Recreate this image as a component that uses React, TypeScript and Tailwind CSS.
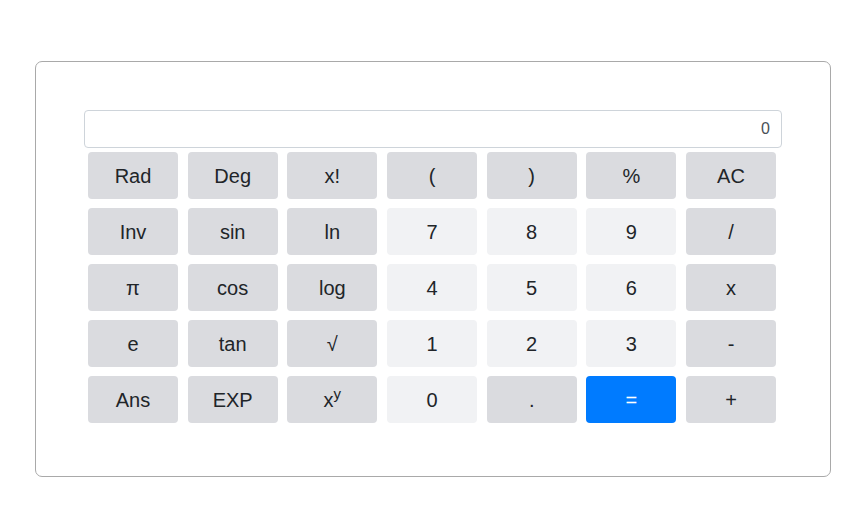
import React from "react";

type Key = { label: React.ReactNode; kind: "fn" | "num" | "eq" };

const fn = (label: React.ReactNode): Key => ({ label, kind: "fn" });
const num = (label: React.ReactNode): Key => ({ label, kind: "num" });

const keys: Key[] = [
    fn("Rad"), fn("Deg"), fn("x!"), fn("("), fn(")"), fn("%"), fn("AC"),
    fn("Inv"), fn("sin"), fn("ln"), num("7"), num("8"), num("9"), fn("/"),
    fn("π"), fn("cos"), fn("log"), num("4"), num("5"), num("6"), fn("x"),
    fn("e"), fn("tan"), fn("√"), num("1"), num("2"), num("3"), fn("-"),
    fn("Ans"), fn("EXP"),
    fn(<span>x<sup className="text-[15px] relative -top-[8px]">y</sup></span>),
    num("0"), fn("."), { label: "=", kind: "eq" }, fn("+"),
];

const kindClass: Record<Key["kind"], string> = {
    fn: "bg-[#dadbdf] text-[#212529]",
    num: "bg-[#f1f2f4] text-[#212529]",
    eq: "bg-[#007bff] text-white",
};

export default function App() {
    return (
        <div className="w-[863px] h-[506px] bg-white pt-[61px] pl-[35px]" style={{ fontFamily: "'Liberation Sans', Arial, sans-serif" }}>
            <div className="w-[796px] h-[416px] border border-[#a9a9a9] rounded-[7px] pt-[48px] pl-[48px]">
                <div className="w-[698px]">
                    {/* display */}
                    <div className="h-[38px] border border-[#ced4da] rounded-[4px] flex items-center justify-end pr-[11px] text-[16px] text-[#495057]">
                        0
                    </div>
                    {/* keypad */}
                    <div className="mt-[4px] pl-[4px] pr-[6px] grid grid-cols-7 gap-x-[9.67px] gap-y-[9px]">
                        {keys.map((k, i) => (
                            <button
                                key={i}
                                className={`h-[47px] rounded-[4px] flex items-center justify-center text-[20px] ${kindClass[k.kind]}`}
                            >
                                {k.label}
                            </button>
                        ))}
                    </div>
                </div>
            </div>
        </div>
    );
}
